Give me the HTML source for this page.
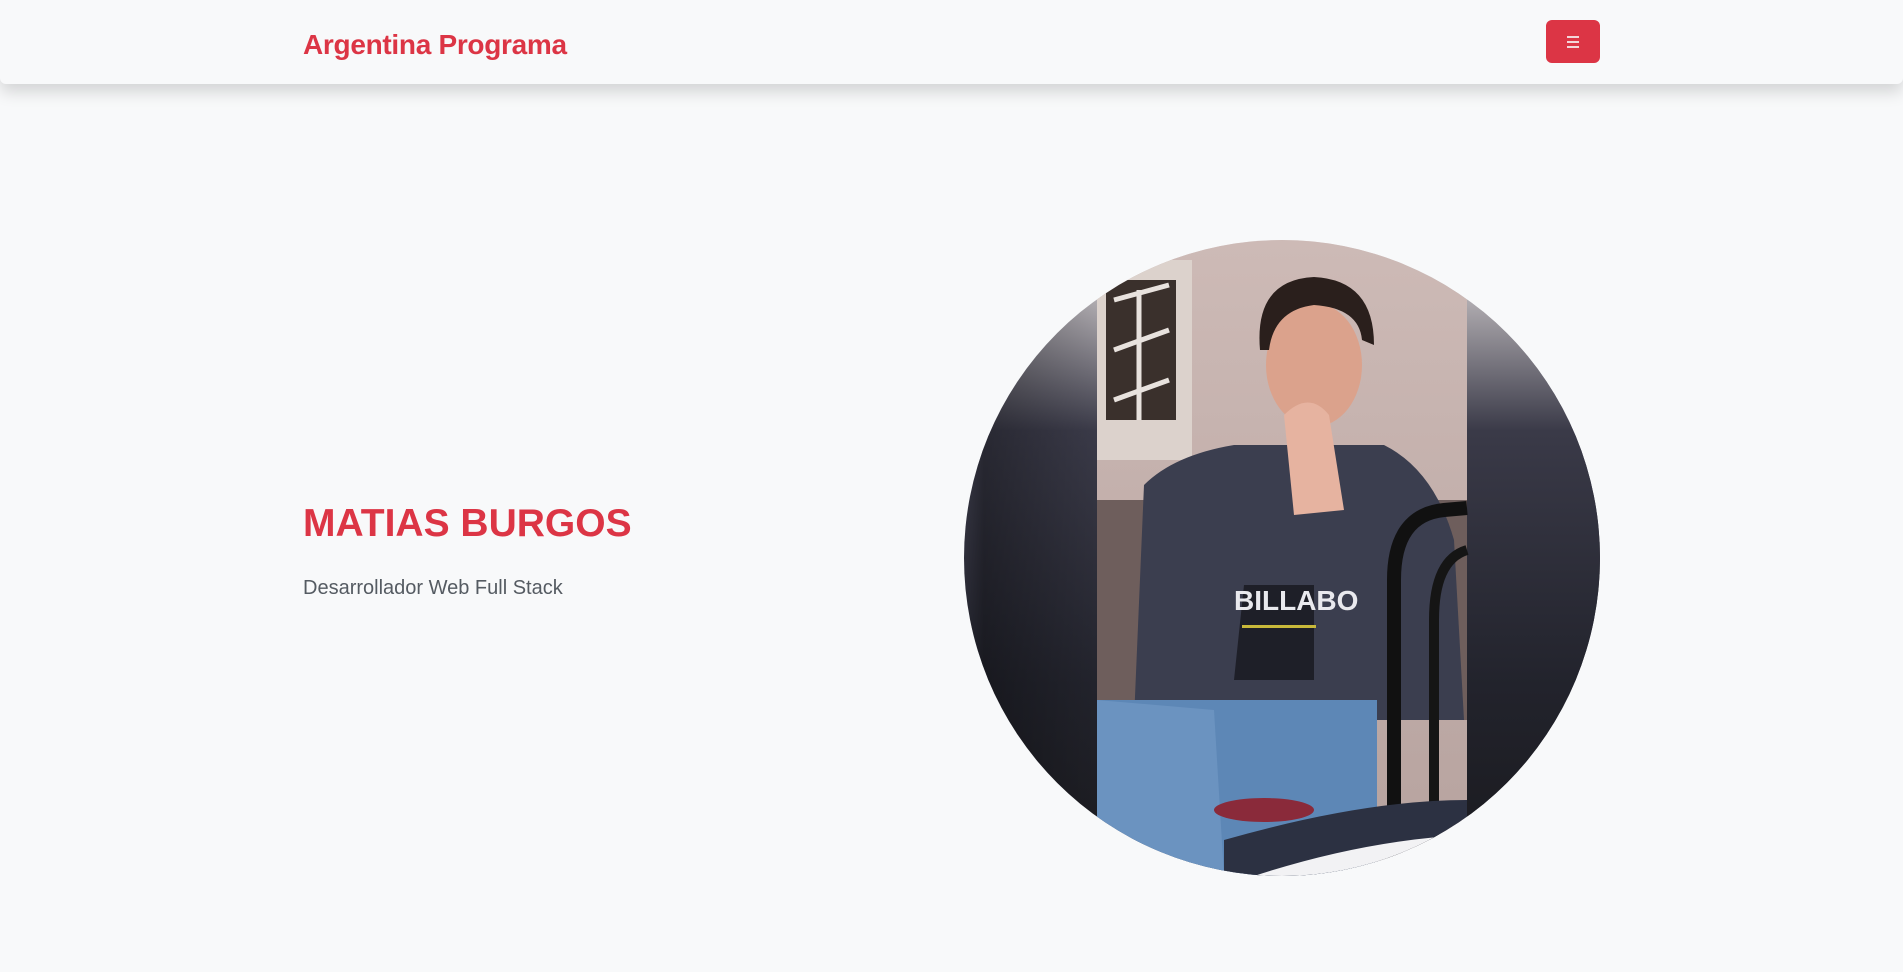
<!DOCTYPE html>
<html><head><meta charset="utf-8"><style>
html,body{margin:0;padding:0;width:1903px;height:972px;overflow:hidden;background:#f8f9fa;font-family:"Liberation Sans",sans-serif}
.nav{position:absolute;left:0;top:0;width:1903px;height:84px;background:#f8f9fa;box-shadow:0 8px 16px rgba(0,0,0,.15);border-radius:0 0 6px 6px}
.brand{position:absolute;left:303px;top:29px;font-size:28px;font-weight:bold;color:#dc3545;letter-spacing:-0.3px}
.btn{position:absolute;left:1546px;top:20px;width:54px;height:43px;background:#dc3545;border-radius:6px}
.btn i{position:absolute;left:21px;width:12px;height:2px;background:#f3d6d9}
h1{position:absolute;left:303px;top:502px;margin:0;font-size:39px;font-weight:bold;color:#dc3545}
.sub{position:absolute;left:303px;top:577px;font-size:20px;color:#555b62}
svg{position:absolute;left:964px;top:240px}
</style></head><body>
<div class="nav"><div class="brand">Argentina Programa</div>
<div class="btn"><i style="top:16px"></i><i style="top:21px"></i><i style="top:26px"></i></div></div>
<h1>MATIAS BURGOS</h1>
<div class="sub">Desarrollador Web Full Stack</div>
<svg width="636" height="636" viewBox="0 0 636 636">
<defs>
<clipPath id="c"><circle cx="318" cy="318" r="318"/></clipPath>
<linearGradient id="side" x1="0" y1="0" x2="0" y2="1">
<stop offset="0" stop-color="#e6e0e0"/><stop offset="0.3" stop-color="#3a3a48"/><stop offset="0.7" stop-color="#22232c"/><stop offset="1" stop-color="#1a1a1e"/></linearGradient>
<linearGradient id="sideh" x1="0" y1="0" x2="1" y2="0">
<stop offset="0" stop-color="#000" stop-opacity="0"/><stop offset="0.15" stop-color="#000" stop-opacity=".3"/><stop offset="1" stop-color="#000" stop-opacity="0"/></linearGradient>
<linearGradient id="wall" x1="0" y1="0" x2="0" y2="1">
<stop offset="0" stop-color="#cdbab6"/><stop offset="1" stop-color="#b6a29e"/></linearGradient>
</defs>
<g clip-path="url(#c)">
<rect width="636" height="636" fill="url(#side)"/>
<rect x="0" width="133" height="636" fill="url(#sideh)"/>
<rect x="503" y="0" width="133" height="636" fill="url(#side)"/>
<rect x="133" y="0" width="370" height="636" fill="url(#wall)"/>
<rect x="133" y="20" width="95" height="200" fill="#dcd2cc"/>
<rect x="142" y="40" width="70" height="140" fill="#3a302c"/>
<path d="M150 60 L205 45 M150 110 L205 90 M150 160 L205 140 M175 50 L175 180" stroke="#e8e2de" stroke-width="5"/>
<rect x="133" y="260" width="370" height="220" fill="#6e5e5c"/>
<path d="M180 245 Q210 215 270 205 L420 205 Q470 230 490 300 L500 480 L170 480 Z" fill="#3b3e4f"/>
<path d="M280 345 L350 345 L350 440 L270 440 Z" fill="#1e1f28"/>
<text x="270" y="370" font-family="Liberation Sans" font-weight="bold" font-size="28" fill="#e9e9ee">BILLABO</text>
<rect x="278" y="385" width="74" height="3" fill="#c8b83a"/>
<ellipse cx="350" cy="125" rx="48" ry="62" fill="#dba28c"/>
<path d="M296 110 Q290 40 350 37 Q410 40 410 105 L398 100 Q395 68 350 65 Q310 70 305 110 Z" fill="#2a1f1c"/>
<path d="M320 175 Q345 150 365 175 L380 270 L330 275 Z" fill="#e6b3a0"/>
<rect x="133" y="460" width="280" height="176" fill="#5d87b6"/>
<path d="M133 460 L250 470 L260 636 L133 636 Z" fill="#6b93c0"/>
<path d="M430 636 L430 340 Q430 275 480 270 L503 268" stroke="#111" stroke-width="14" fill="none"/>
<path d="M470 600 L470 380 Q470 320 503 310" stroke="#151515" stroke-width="10" fill="none"/>
<path d="M260 600 Q400 560 503 560 L503 636 L260 636 Z" fill="#2c3142"/>
<path d="M290 636 Q400 600 503 595 L503 636 Z" fill="#f2f2f4"/>
<ellipse cx="300" cy="570" rx="50" ry="12" fill="#8a2a3a"/>
</g>
</svg>
</body></html>
